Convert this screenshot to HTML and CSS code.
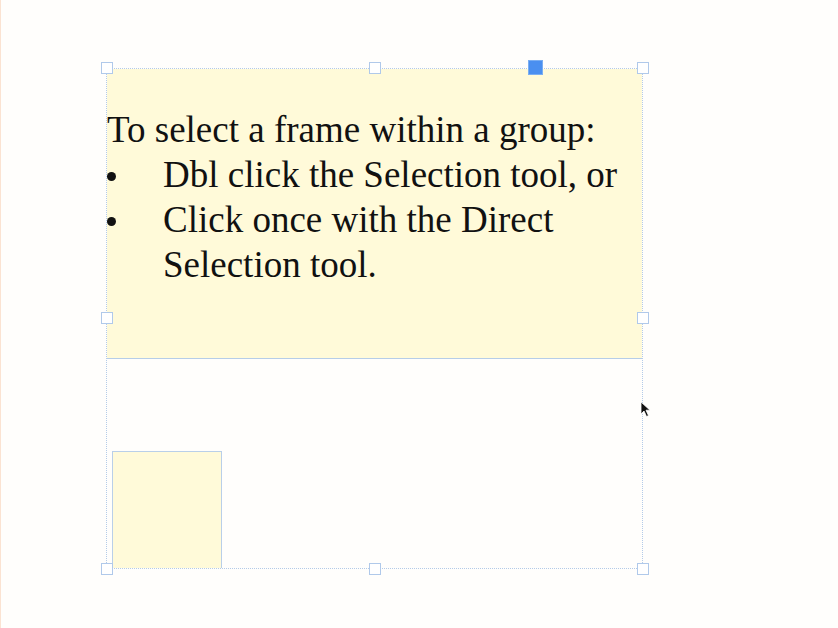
FILE: index.html
```html
<!DOCTYPE html>
<html>
<head>
<meta charset="utf-8">
<link rel="stylesheet" href="styles.css">
</head>
<body>
<div class="canvas">
  <div class="group">
    <div class="text-frame">
      <p class="lead">To select a frame within a group:</p>
      <ul class="list">
        <li>Dbl click the Selection tool, or</li>
        <li>Click once with the Direct Selection tool.</li>
      </ul>
    </div>
    <div class="lower">
      <div class="small-frame"></div>
    </div>
  </div>
  <span class="handle h-tl"></span>
  <span class="handle h-tc"></span>
  <span class="handle h-tr"></span>
  <span class="handle h-ml"></span>
  <span class="handle h-mr"></span>
  <span class="handle h-bl"></span>
  <span class="handle h-bc"></span>
  <span class="handle h-br"></span>
  <span class="handle h-ref"></span>
  <svg class="cursor" width="12" height="18" viewBox="0 0 12 18">
    <path d="M1 1 L1 13 L4 10 L6.5 15.5 L8.5 14.6 L6 9.2 L10 9.2 Z" fill="#111" stroke="#fff" stroke-width="0.8"/>
  </svg>
</div>
</body>
</html>
```
FILE: styles.css
```css
html, body {
  margin: 0;
  padding: 0;
  background: #fffefc;
}
.canvas {
  position: relative;
  width: 838px;
  height: 628px;
  border-left: 1px solid #fbe3d2;
  box-sizing: border-box;
  overflow: hidden;
}
.group {
  position: absolute;
  left: 105px;
  top: 68px;
  width: 537px;
  height: 501px;
  border: 1px dotted #b4cbe8;
  box-sizing: border-box;
  display: flex;
  flex-direction: column;
}
.text-frame {
  height: 290px;
  background: #fffad9;
  border-bottom: 1px solid #b6cde8;
  box-sizing: border-box;
  padding-top: 38px;
  font-family: "Liberation Serif", "DejaVu Serif", serif;
  font-size: 37px;
  line-height: 45px;
  color: #111;
}
.lead {
  margin: 0;
}
.list {
  margin: 0;
  padding: 0 0 0 56px;
  list-style: none;
}
.list li {
  position: relative;
  width: 475px;
}
.list li::before {
  content: "";
  position: absolute;
  left: -56px;
  top: 20px;
  width: 9px;
  height: 9px;
  border-radius: 50%;
  background: #111;
}
.lower {
  flex: 1;
  display: flex;
  align-items: flex-end;
  padding-left: 5px;
}
.small-frame {
  width: 110px;
  height: 117px;
  background: #fffad9;
  border: 1px solid #b9cfe9;
  border-bottom: none;
  box-sizing: border-box;
}
.handle {
  position: absolute;
  width: 12px;
  height: 12px;
  background: #fff;
  border: 1px solid #b0c9ea;
  box-sizing: border-box;
}
.h-tl { left: 100px; top: 62px; }
.h-tc { left: 368px; top: 62px; }
.h-tr { left: 636px; top: 62px; }
.h-ml { left: 100px; top: 312px; }
.h-mr { left: 636px; top: 312px; }
.h-bl { left: 100px; top: 563px; }
.h-bc { left: 368px; top: 563px; }
.h-br { left: 636px; top: 563px; }
.h-ref {
  left: 527px;
  top: 60px;
  width: 15px;
  height: 15px;
  background: #4a8ff0;
  border-color: #7aaef2;
}
.cursor {
  position: absolute;
  left: 639px;
  top: 401px;
}
```
